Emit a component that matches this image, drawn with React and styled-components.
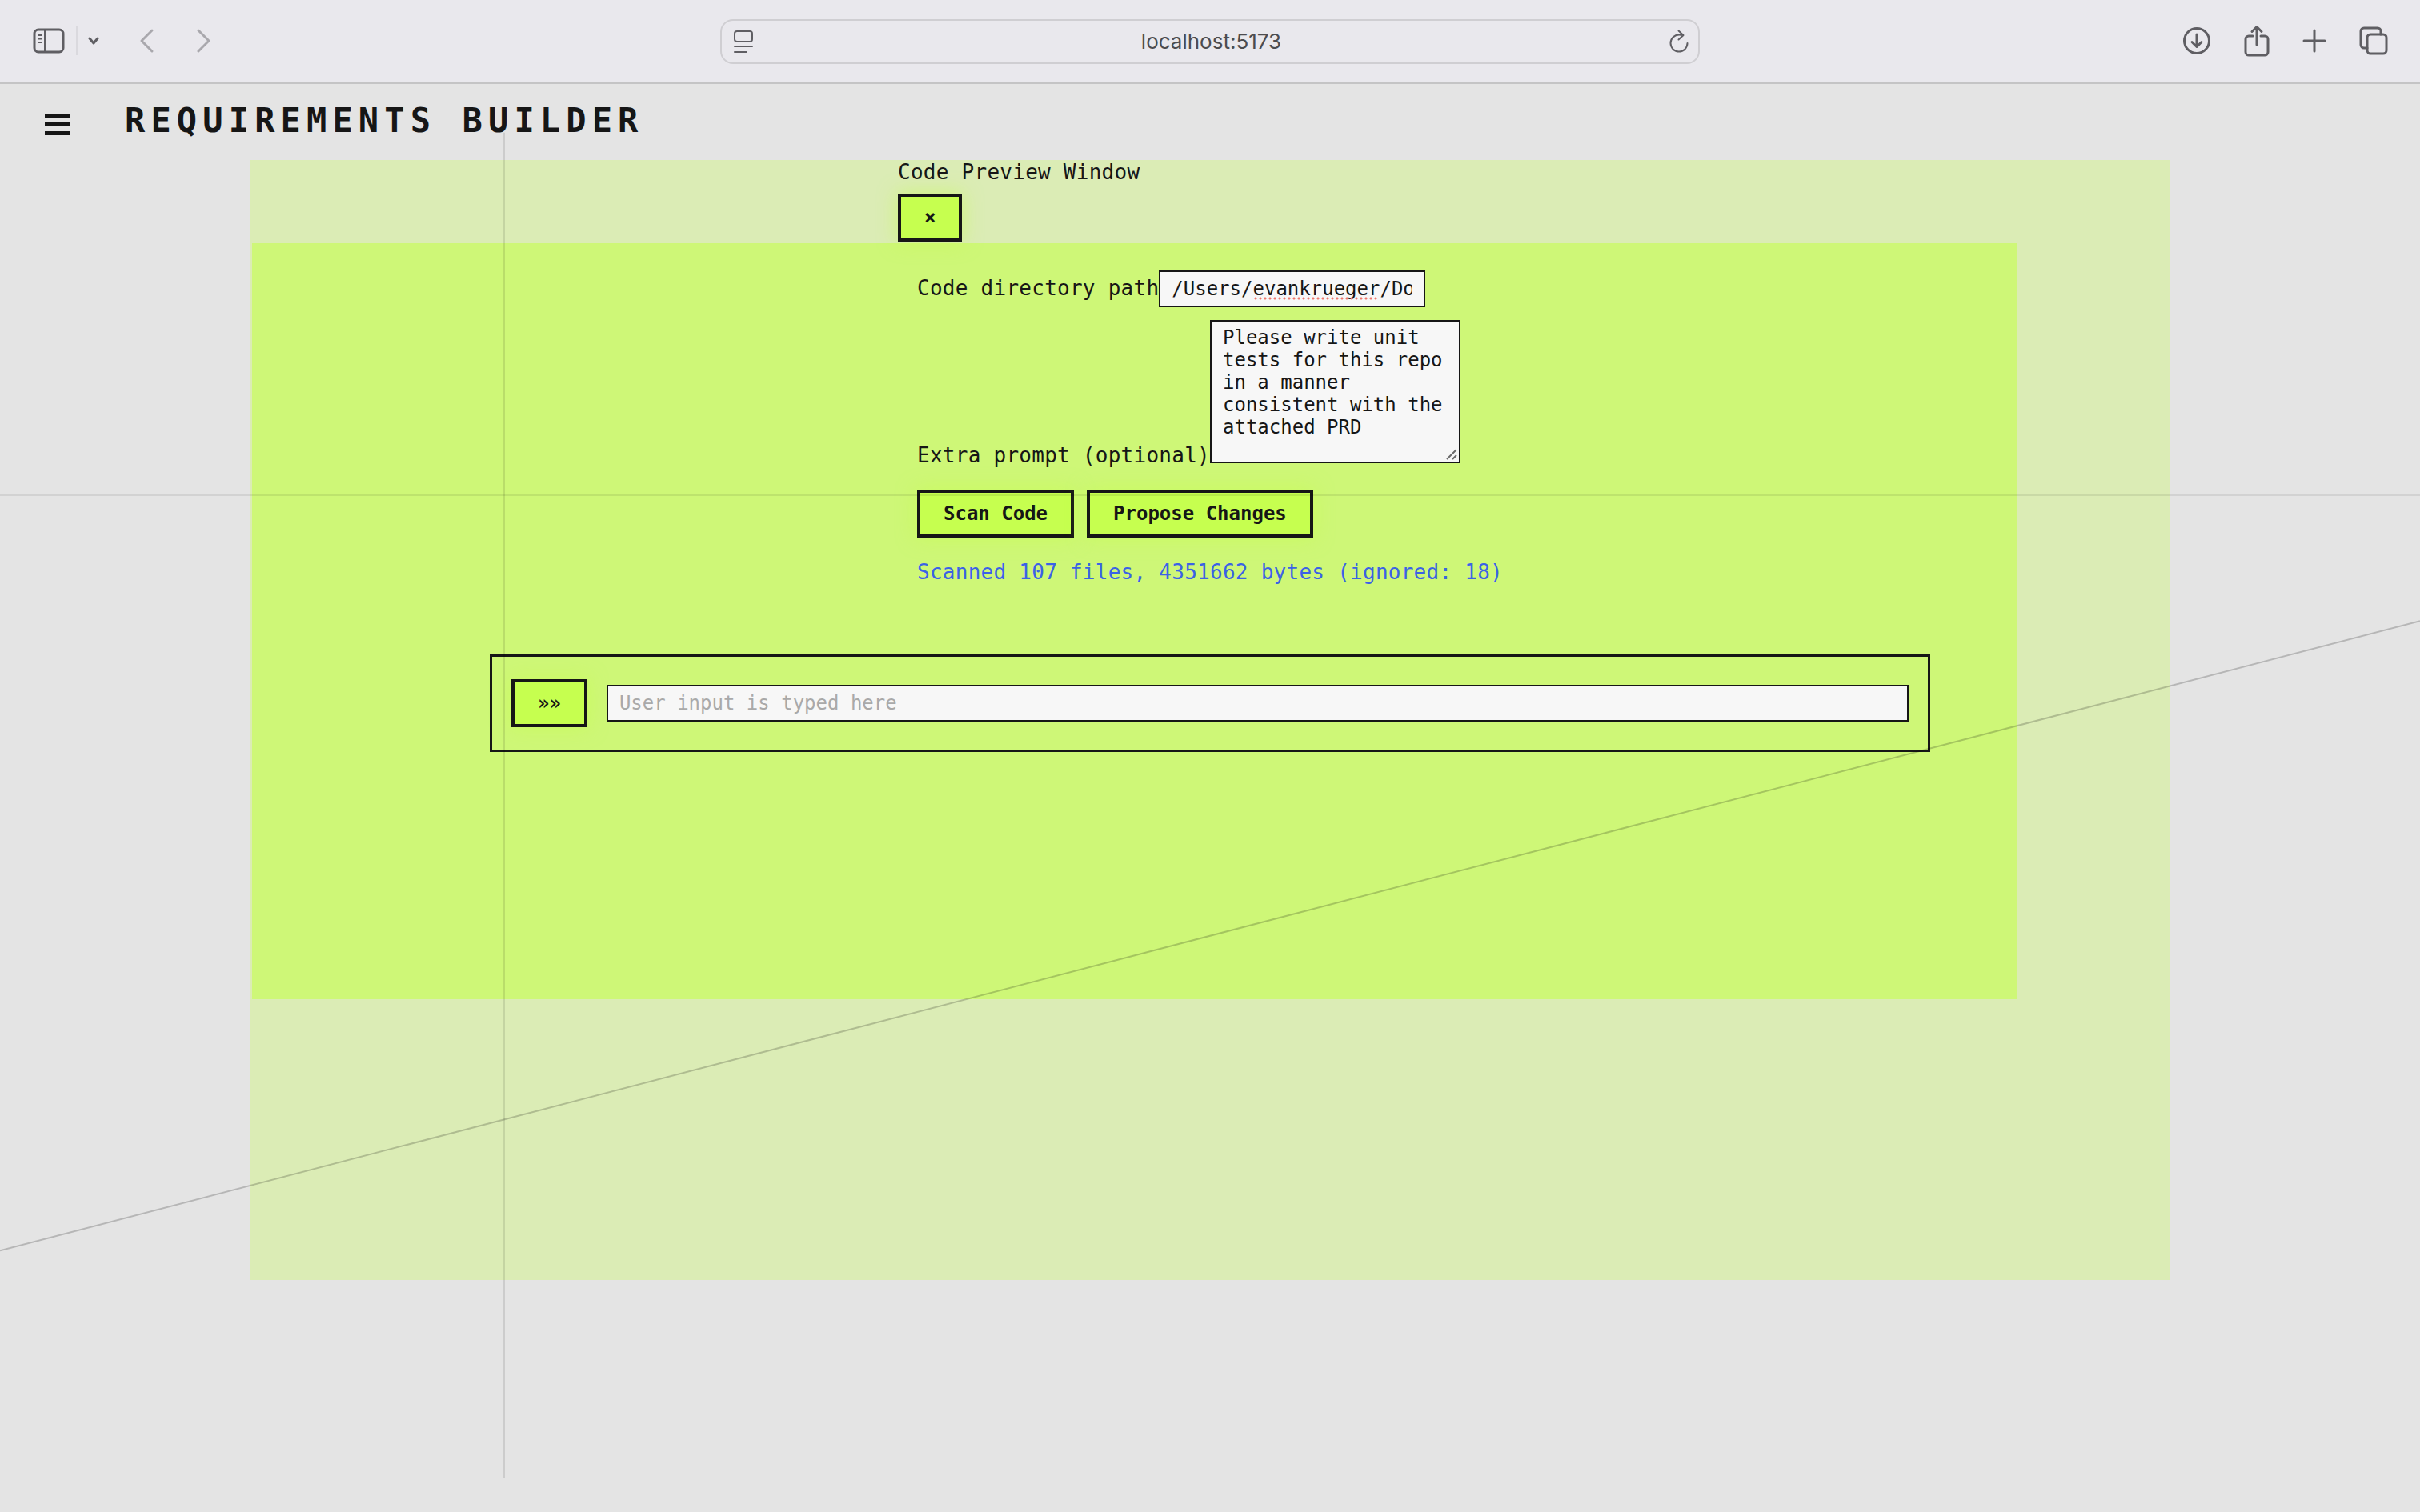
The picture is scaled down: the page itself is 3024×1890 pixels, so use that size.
import React, { useState } from "react";
import styled, { createGlobalStyle } from "styled-components";

const ink = "#161616";
const lime = "#c6ff4f";
const mono = `"DejaVu Sans Mono", "Liberation Mono", monospace`;

const GlobalStyle = createGlobalStyle`
  *, *::before, *::after { box-sizing: border-box; }
  body {
    margin: 0;
    background: #e4e4e4;
    color: ${ink};
    font-family: ${mono};
    font-size: 26px;
    line-height: 30px;
    letter-spacing: 0.01em;
  }
`;

const Browser = styled.div`
  display: flex;
  flex-direction: column;
  min-height: 100vh;
`;

const Toolbar = styled.header`
  display: grid;
  grid-template-columns: 1fr minmax(400px, 1224px) 1fr;
  align-items: center;
  height: 105px;
  padding: 0 40px;
  background: #e9e8ed;
  border-bottom: 2px solid #c4c4c5;
`;

const ToolGroup = styled.div`
  display: flex;
  align-items: center;
  justify-content: ${(p) => (p.$end ? "flex-end" : "flex-start")};
  gap: ${(p) => p.$gap}px;
  padding-bottom: 2px;
`;

const ToolButton = styled.button`
  display: flex;
  padding: 0;
  border: 0;
  background: none;
  color: ${(p) => (p.$muted ? "#a9a8ad" : "#5f5e63")};
`;

const Divider = styled.span`
  width: 2px;
  height: 36px;
  background: #dad9de;
`;

const NavButtons = styled.div`
  display: flex;
  gap: 52px;
  margin-left: 36px;
`;

const AddressBar = styled.div`
  display: flex;
  align-items: center;
  height: 56px;
  padding: 0 12px 0 15px;
  border: 2px solid #cfced2;
  border-radius: 16px;
`;

const AddressInput = styled.input`
  flex: 1;
  min-width: 0;
  border: 0;
  background: none;
  color: #4c4c4f;
  font: 26px/32px Inter, sans-serif;
  text-align: center;
  outline: none;
`;

const Page = styled.div`
  position: relative;
  flex: 1;
`;

const Guides = styled.svg`
  position: absolute;
  inset: 0;
  width: 100%;
  height: 100%;
  pointer-events: none;
`;

const PageHeader = styled.div`
  display: flex;
  align-items: center;
  gap: 68px;
  height: 95px;
  padding: 0 56px 4px;
`;

const MenuButton = styled.button`
  display: flex;
  flex-direction: column;
  gap: 6px;
  padding: 10px 0 0;
  border: 0;
  background: none;
`;

const MenuBar = styled.span`
  width: 32px;
  height: 5px;
  background: ${ink};
`;

const Title = styled.h1`
  margin: 0;
  font-size: 42px;
  line-height: 48px;
  font-weight: 700;
  letter-spacing: 0.17em;
`;

const Stage = styled.main`
  width: calc(100% - 48px);
  max-width: 2400px;
  min-height: 1400px;
  margin: 0 auto;
  background: #dbecb5;
`;

const PreviewColumn = styled.div`
  width: 780px;
  max-width: 100%;
  margin: 0 auto;
  padding: ${(p) => p.$padding || 0};
`;

const PreviewTitle = styled.div`
  margin-bottom: 12px;
`;

const Workspace = styled.section`
  min-height: 945px;
  margin: 2px 8% 0 3px;
  padding: 34px 0 0 189px;
  background: #cef777;
`;

const Field = styled.div`
  display: flex;
  align-items: ${(p) => p.$align};
  margin-bottom: ${(p) => p.$space}px;
  white-space: nowrap;
`;

const Label = styled.label`
  line-height: 20px;
`;

const control = `
  position: relative;
  margin: 0;
  border: 2px solid ${ink};
  border-radius: 0;
  background: #f7f7f7;
  color: ${ink};
  font: 24px/28px ${mono};
  outline: none;
  &::placeholder { color: #a9a9a9; opacity: 1; }
`;

const TextInput = styled.input`
  ${control}
  height: 46px;
  padding: 0 14px;
  ${(p) => (p.$grow ? "flex: 1; min-width: 0;" : "width: 333px;")}
`;

const PathBox = styled.div`
  position: relative;
  display: flex;
`;

const SpellMark = styled.span`
  position: absolute;
  left: 118px;
  bottom: 9px;
  width: 156px;
  height: 4px;
  background: radial-gradient(circle, #f0776c 1px, transparent 2px) 0 0 / 6px 4px;
`;

const PromptBox = styled.div`
  position: relative;
  display: flex;
`;

const TextArea = styled.textarea`
  ${control}
  width: 313px;
  height: 179px;
  padding: 6px 14px;
  overflow: hidden;
  resize: none;
`;

const Grip = styled.svg`
  position: absolute;
  right: 4px;
  bottom: 4px;
`;

const Actions = styled.div`
  display: flex;
  gap: 16px;
  margin-bottom: 28px;
`;

const Button = styled.button`
  position: relative;
  flex: none;
  padding: 12px 29px;
  border: 4px solid ${ink};
  background: ${lime};
  box-shadow: 0 0 24px rgba(198, 255, 79, 0.6);
  color: ${ink};
  font: 700 24px/28px ${mono};
`;

const Status = styled.p`
  margin: 0;
  color: #3b62e6;
  white-space: nowrap;
`;

const Composer = styled.form`
  display: flex;
  align-items: center;
  gap: 24px;
  width: 1800px;
  max-width: calc(100% - 48px);
  height: 122px;
  margin: 0 auto;
  padding: 0 24px;
  border: 3px solid ${ink};
`;

const Icon = ({ w, h, sw = 3, children }) => (
  <svg width={w} height={h} viewBox={`0 0 ${w} ${h}`} fill="none" stroke="currentColor"
    strokeWidth={sw} strokeLinecap="round" strokeLinejoin="round" aria-hidden="true">
    {children}
  </svg>
);

export default function App() {
  const [path, setPath] = useState("/Users/evankrueger/Documents");
  const [prompt, setPrompt] = useState(
    "Please write unit tests for this repo in a manner consistent with the attached PRD"
  );

  return (
    <Browser>
      <GlobalStyle />
      <Toolbar>
        <ToolGroup $gap={13}>
          <ToolButton aria-label="Show sidebar">
            <Icon w={42} h={34}>
              <rect x="3" y="3" width="36" height="28" rx="5" />
              <path d="M16 3v28" strokeWidth="2" />
              <path d="M8 10h4M8 14.500h4M8 19h4" strokeWidth="2" />
            </Icon>
          </ToolButton>
          <Divider />
          <ToolButton aria-label="Tab groups">
            <Icon w={14} h={12}><path d="M2 3l5 6 5-6" /></Icon>
          </ToolButton>
          <NavButtons>
            <ToolButton $muted aria-label="Back">
              <Icon w={20} h={32}><path d="M17 3L4 16l13 13" /></Icon>
            </ToolButton>
            <ToolButton $muted aria-label="Forward">
              <Icon w={20} h={32}><path d="M3 3l13 13L3 29" /></Icon>
            </ToolButton>
          </NavButtons>
        </ToolGroup>
        <AddressBar>
          <ToolButton aria-label="Page menu">
            <Icon w={24} h={30} sw={2}>
              <rect x="1" y="2" width="22" height="13" rx="3" />
              <path d="M1 21h22M1 28h15" />
            </Icon>
          </ToolButton>
          <AddressInput aria-label="Address" defaultValue="localhost:5173" />
          <ToolButton aria-label="Reload">
            <Icon w={24} h={30} sw={2}>
              <path d="M17 7q-2.500-.5-5-.5a10.500 10.500 0 1 0 10.500 10.500M11.500 1.500L17.500 7l-6 5.500" />
            </Icon>
          </ToolButton>
        </AddressBar>
        <ToolGroup $gap={41} $end>
          <ToolButton aria-label="Downloads">
            <Icon w={36} h={36}>
              <circle cx="18" cy="18" r="15.500" />
              <path d="M18 10v15M12 19.500l6 6 6-6" />
            </Icon>
          </ToolButton>
          <ToolButton aria-label="Share">
            <Icon w={32} h={40}>
              <path d="M11 14H6a4 4 0 0 0-4 4v16a4 4 0 0 0 4 4h20a4 4 0 0 0 4-4V18a4 4 0 0 0-4-4h-5M16 25V3M10 8.500L16 2.500l6 6" />
            </Icon>
          </ToolButton>
          <ToolButton aria-label="New tab">
            <Icon w={30} h={30}><path d="M15 2v26M2 15h26" /></Icon>
          </ToolButton>
          <ToolButton aria-label="Tab overview">
            <Icon w={36} h={38}>
              <rect x="10" y="11" width="24" height="24" rx="4" />
              <path d="M10 28H6a4 4 0 0 1-4-4V7a4 4 0 0 1 4-4h17a4 4 0 0 1 4 4v4" />
            </Icon>
          </ToolButton>
        </ToolGroup>
      </Toolbar>

      <Page>
        <PageHeader>
          <MenuButton aria-label="Menu">
            <MenuBar /><MenuBar /><MenuBar />
          </MenuButton>
          <Title>REQUIREMENTS BUILDER</Title>
        </PageHeader>

        <Stage>
          <PreviewColumn>
            <PreviewTitle>Code Preview Window</PreviewTitle>
            <Button type="button" aria-label="Close">×</Button>
          </PreviewColumn>
          <Workspace>
            <PreviewColumn $padding="0 24px 88px">
              <Field $space={16} $align="baseline">
                <Label htmlFor="path">Code directory path</Label>
                <PathBox>
                  <TextInput id="path" value={path} onChange={(e) => setPath(e.target.value)} />
                  <SpellMark />
                </PathBox>
              </Field>
              <Field $space={33} $align="flex-end">
                <Label htmlFor="prompt">Extra prompt (optional)</Label>
                <PromptBox>
                  <TextArea id="prompt" value={prompt} onChange={(e) => setPrompt(e.target.value)} />
                  <Grip width="14" height="14" viewBox="0 0 14 14" stroke="#6b6b6b" strokeWidth="2">
                    <path d="M1 13L13 1M8 13l5-5" />
                  </Grip>
                </PromptBox>
              </Field>
              <Actions>
                <Button type="button">Scan Code</Button>
                <Button type="button">Propose Changes</Button>
              </Actions>
              <Status>Scanned 107 files, 4351662 bytes (ignored: 18)</Status>
            </PreviewColumn>
            <Composer onSubmit={(e) => e.preventDefault()}>
              <Button type="submit" aria-label="Send">»»</Button>
              <TextInput $grow aria-label="User input" placeholder="User input is typed here" />
            </Composer>
          </Workspace>
        </Stage>

        <Guides aria-hidden="true" stroke="#000" strokeWidth="2">
          <line x1="0" y1="28.8%" x2="100%" y2="28.8%" strokeOpacity="0.08" />
          <line x1="630" y1="3.4%" x2="630" y2="97.6%" strokeOpacity="0.1" />
          <line x1="0" y1="81.7%" x2="100%" y2="37.6%" strokeOpacity="0.2" />
        </Guides>
      </Page>
    </Browser>
  );
}
